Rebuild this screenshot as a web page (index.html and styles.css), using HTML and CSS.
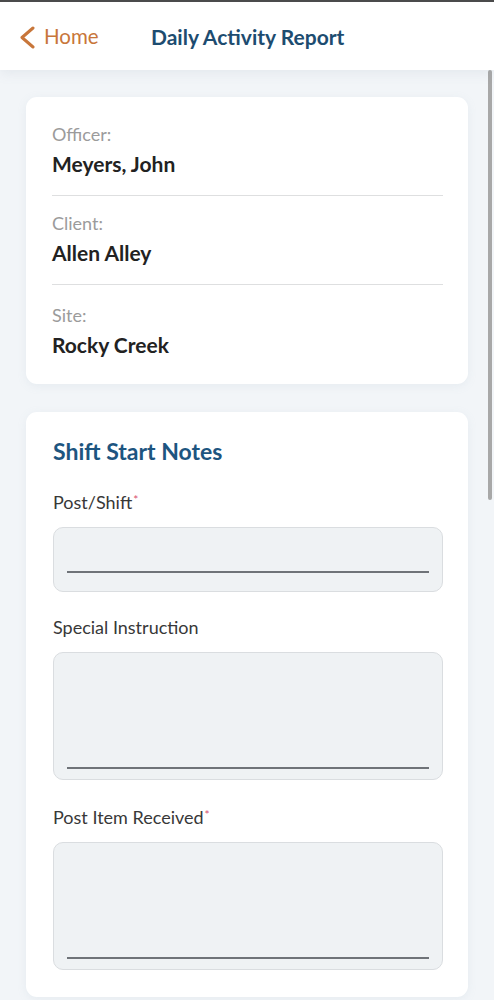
FILE: index.html
```html
<!DOCTYPE html>
<html>
<head>
<meta charset="utf-8">
<link rel="stylesheet" href="styles.css">
</head>
<body>
<div class="topline"></div>
<header class="header">
  <a class="back">
    <svg class="chev" width="16" height="24" viewBox="0 0 16 24"><polyline points="14,3 3,12.5 14,22" fill="none" stroke="#c8763a" stroke-width="3" stroke-linecap="round" stroke-linejoin="round"/></svg>
    <span>Home</span>
  </a>
  <h1 class="title">Daily Activity Report</h1>
</header>
<main class="content">
  <section class="card info">
    <div class="row">
      <div class="lbl">Officer:</div>
      <div class="val">Meyers, John</div>
    </div>
    <div class="row">
      <div class="lbl">Client:</div>
      <div class="val">Allen Alley</div>
    </div>
    <div class="row last">
      <div class="lbl">Site:</div>
      <div class="val">Rocky Creek</div>
    </div>
  </section>
  <section class="card form">
    <h2 class="sec">Shift Start Notes</h2>
    <div class="field">
      <div class="flbl">Post/Shift<span class="req">*</span></div>
      <div class="box short"><div class="uline"></div></div>
    </div>
    <div class="field">
      <div class="flbl">Special Instruction</div>
      <div class="box tall"><div class="uline"></div></div>
    </div>
    <div class="field">
      <div class="flbl">Post Item Received<span class="req">*</span></div>
      <div class="box tall"><div class="uline"></div></div>
    </div>
  </section>
</main>
<div class="scrollthumb"></div>
</body>
</html>
```
FILE: styles.css
```css
* { box-sizing: border-box; }
html, body { margin: 0; padding: 0; }
body {
  background: #f2f5f8;
  font-family: Lato, "Open Sans", sans-serif;
  width: 494px;
  height: 1000px;
  overflow: hidden;
  position: relative;
}
.topline { height: 2px; background: #4a4a4a; }
.header {
  height: 68px;
  background: #ffffff;
  display: flex;
  align-items: center;
  padding-left: 19px;
  box-shadow: 0 3px 12px rgba(120, 140, 160, 0.12);
  position: relative;
  z-index: 1;
}
.back {
  display: flex;
  align-items: center;
  gap: 9px;
  color: #c8763a;
  font-size: 20.5px;
  width: 132px;
}
.chev { display: block; margin-top: 1px; }
.title {
  margin: 0;
  font-size: 21px;
  font-weight: 700;
  color: #1d4c70;
}
.content {
  padding: 27px 26px 0 26px;
  display: flex;
  flex-direction: column;
  gap: 28px;
}
.card {
  background: #ffffff;
  border-radius: 11px;
  box-shadow: 0 2px 10px rgba(150, 170, 190, 0.12);
}
.info { padding: 10px 25px 8px 26px; }
.row {
  padding: 16px 0 18px;
  border-bottom: 1px solid #dedfe0;
}
.row.last { border-bottom: none; padding-top: 19px; }
.lbl {
  font-size: 18px;
  line-height: 22px;
  color: #9b9b9b;
}
.val {
  margin-top: 6px;
  font-size: 21px;
  line-height: 26px;
  font-weight: 700;
  color: #222222;
}
.form { padding: 25px 26px 27px 27px; }
.sec {
  margin: 0;
  font-size: 23px;
  line-height: 28px;
  font-weight: 700;
  color: #1d5580;
}
.field { margin-top: 24px; }
.field + .field { margin-top: 24px; }
.flbl {
  font-size: 18px;
  line-height: 22px;
  color: #383838;
}
.req {
  color: #d9506f;
  font-size: 12px;
  vertical-align: 5px;
  margin-left: 1px;
}
.box {
  margin-top: 14px;
  background: #eff2f4;
  border: 1px solid #dadde0;
  border-radius: 10px;
  display: flex;
  flex-direction: column;
  justify-content: flex-end;
  padding: 0 13px;
  width: 390px;
}
.box.short { height: 65px; padding-bottom: 18px; }
.box.tall { height: 128px; padding-bottom: 10px; }
.uline { height: 2px; background: #6f7378; }
.scrollthumb {
  position: absolute;
  right: 2px;
  top: 70px;
  width: 4px;
  height: 430px;
  background: #a8a8a8;
  border-radius: 2px;
}
```
